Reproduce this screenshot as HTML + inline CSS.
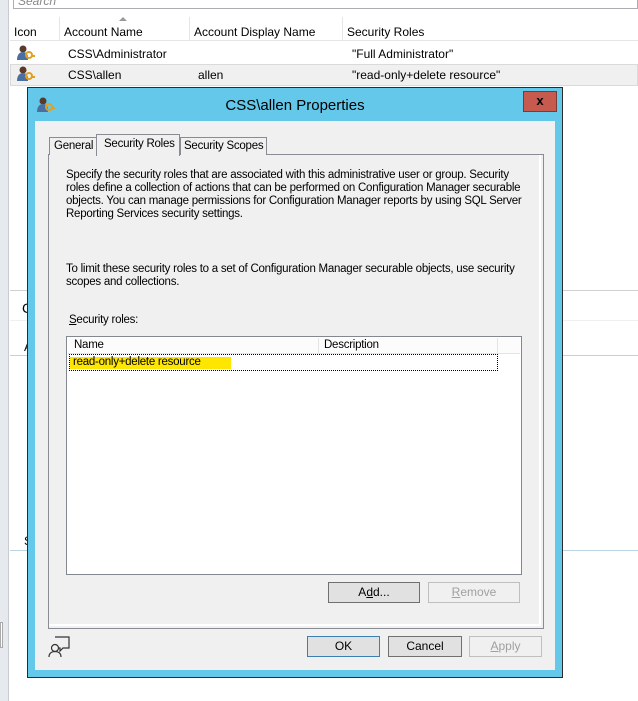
<!DOCTYPE html>
<html><head><style>
*{margin:0;padding:0;box-sizing:border-box}
body{width:638px;height:701px;background:#fff;position:relative;overflow:hidden;font-family:"Liberation Sans",Arial,sans-serif;font-size:12px;color:#000}
.a{position:absolute;white-space:nowrap}
.btn{position:absolute;height:21px;border:1px solid #707070;background:#e1e1e1;text-align:center;line-height:19px;font-size:12px}
.p{letter-spacing:-0.25px;font-size:11.5px}
</style></head><body>
<div class="a" style="left:0;top:0;width:9px;height:701px;background:#e6e9ed;border-right:1px solid #c8ccd0"></div>
<div class="a" style="left:13px;top:-4px;width:625px;height:13px;border:1px solid #abadb3;background:#fff"></div>
<div class="a" style="left:18px;top:-6px;color:#888;font-style:italic;font-size:12px">Search</div>
<div class="a" style="left:10px;top:17px;width:628px;height:24px;background:#fff;border-bottom:1px solid #e5e5e5"></div>
<div class="a" style="left:59px;top:17px;width:1px;height:24px;background:#e5e5e5"></div>
<div class="a" style="left:189px;top:17px;width:1px;height:24px;background:#e5e5e5"></div>
<div class="a" style="left:342px;top:17px;width:1px;height:24px;background:#e5e5e5"></div>
<div class="a" style="left:119px;top:17px;width:0;height:0;border-left:4px solid transparent;border-right:4px solid transparent;border-bottom:4px solid #999"></div>
<div class="a" style="left:14px;top:25px">Icon</div>
<div class="a" style="left:64px;top:25px">Account Name</div>
<div class="a" style="left:194px;top:25px">Account Display Name</div>
<div class="a" style="left:347px;top:25px">Security Roles</div>
<div class="a" style="left:68px;top:47px">CSS\Administrator</div>
<div class="a" style="left:352px;top:47px">"Full Administrator"</div>
<div class="a" style="left:10px;top:64px;width:628px;height:22px;background:#f0f0f0;border:1px solid #dadada"></div>
<div class="a" style="left:68px;top:68px">CSS\allen</div>
<div class="a" style="left:198px;top:68px">allen</div>
<div class="a" style="left:352px;top:68px">"read-only+delete resource"</div>
<svg class="a" style="left:16px;top:44px" width="20" height="20"><circle cx="7" cy="5" r="3.5" fill="#5a3a2a"/><path d="M1 16c0-6 3-8 6-8s5 2 5 6v2z" fill="#4a6fa0"/><circle cx="13" cy="11" r="3" fill="none" stroke="#e0a020" stroke-width="2"/><path d="M15 12l4 0" stroke="#e0a020" stroke-width="2"/></svg>
<svg class="a" style="left:16px;top:65px" width="20" height="20"><circle cx="7" cy="5" r="3.5" fill="#5a3a2a"/><path d="M1 16c0-6 3-8 6-8s5 2 5 6v2z" fill="#4a6fa0"/><circle cx="13" cy="11" r="3" fill="none" stroke="#e0a020" stroke-width="2"/><path d="M15 12l4 0" stroke="#e0a020" stroke-width="2"/></svg>
<div class="a" style="left:10px;top:290px;width:628px;height:1px;background:#d0d0d0"></div>
<div class="a" style="left:10px;top:320px;width:628px;height:1px;background:#f0f0f0"></div>
<div class="a" style="left:10px;top:355px;width:628px;height:1px;background:#b9d4e4"></div>
<div class="a" style="left:10px;top:550px;width:628px;height:1px;background:#b9d4e4"></div>
<div class="a" style="left:22px;top:300px;font-size:14px">C</div>
<div class="a" style="left:24px;top:340px">A</div>
<div class="a" style="left:24px;top:534px">S</div>
<div class="a" style="left:0;top:622px;width:3px;height:26px;border:1px solid #aaa;background:#fff"></div>

<div class="a" style="left:27px;top:87px;width:536px;height:591px;background:#63c8ea;border:1px solid #2b2b2b"></div>
<svg class="a" style="left:36px;top:96px" width="20" height="20"><circle cx="7" cy="5" r="3.5" fill="#5a3a2a"/><path d="M1 16c0-6 3-8 6-8s5 2 5 6v2z" fill="#4a6fa0"/><circle cx="13" cy="11" r="3" fill="none" stroke="#e0a020" stroke-width="2"/><path d="M15 12l4 0" stroke="#e0a020" stroke-width="2"/></svg>
<div class="a" style="left:0;width:590px;top:97px;text-align:center;font-size:15px;color:#000">CSS\allen Properties</div>
<div class="a" style="left:523px;top:91px;width:34px;height:21px;background:#c75a4e;border:1px solid #7a3a33;text-align:center;font-weight:bold;font-size:13px;line-height:18px">x</div>
<div class="a" style="left:35px;top:121px;width:520px;height:549px;background:#f0f0f0"></div>
<div class="a" style="left:48px;top:154px;width:496px;height:475px;border:1px solid #898c95;background:#f0f0f0"></div>
<div class="a" style="left:49px;top:155px;width:492px;height:471px;border-right:2px solid #fff;border-bottom:2px solid #fff"></div>
<div class="a p" style="left:49px;top:137px;width:48px;height:18px;border:1px solid #898c95;border-bottom:none;background:#f0f0f0;padding-left:4px;line-height:17px">General</div>
<div class="a p" style="left:180px;top:137px;width:87px;height:18px;border:1px solid #898c95;border-bottom:none;background:#f0f0f0;padding-left:3px;line-height:17px">Security Scopes</div>
<div class="a p" style="left:96px;top:134px;width:84px;height:22px;border:1px solid #898c95;border-bottom:none;background:#f0f0f0;padding-left:7px;line-height:19px">Security Roles</div>
<div class="a p" style="left:66px;top:169px;line-height:13px">Specify the security roles that are associated with this administrative user or group. Security<br>roles define a collection of actions that can be performed on Configuration Manager securable<br>objects. You can manage permissions for Configuration Manager reports by using SQL Server<br>Reporting Services security settings.</div>
<div class="a p" style="left:66px;top:263px;line-height:13px">To limit these security roles to a set of Configuration Manager securable objects, use security<br>scopes and collections.</div>
<div class="a p" style="left:69px;top:314px"><u>S</u>ecurity roles:</div>
<div class="a" style="left:66px;top:336px;width:456px;height:239px;border:1px solid #828790;background:#fff"></div>
<div class="a" style="left:68px;top:338px;width:452px;height:16px;background:#fcfcfc;border-bottom:1px solid #e5e5e5"></div>
<div class="a" style="left:318px;top:338px;width:1px;height:16px;background:#e5e5e5"></div>
<div class="a" style="left:497px;top:338px;width:1px;height:16px;background:#e5e5e5"></div>
<div class="a p" style="left:74px;top:339px">Name</div>
<div class="a p" style="left:324px;top:339px">Description</div>
<div class="a" style="left:69px;top:354px;width:429px;height:17px;border:1px dotted #000"></div>
<div class="a" style="left:70px;top:357px;width:161px;height:12px;background:#ffe600"></div>
<div class="a p" style="left:73px;top:356px">read-only+delete resource</div>
<div class="btn" style="left:328px;top:582px;width:92px">A<u>d</u>d...</div>
<div class="btn" style="left:428px;top:582px;width:92px;border-color:#bfbfbf;background:#f0f0f0;color:#a0a0a0"><u>R</u>emove</div>
<div class="btn" style="left:307px;top:636px;width:73px;border-color:#3c7fb1">OK</div>
<div class="btn" style="left:388px;top:636px;width:74px">Cancel</div>
<div class="btn" style="left:469px;top:636px;width:73px;border-color:#bfbfbf;background:#f0f0f0;color:#a0a0a0"><u>A</u>pply</div>
<svg class="a" style="left:47px;top:636px" width="24" height="22" fill="none" stroke="#333" stroke-width="1.2"><path d="M8 1h14v11h-6l-3 3v-3h-1"/><circle cx="8" cy="12" r="3.5" fill="#f0f0f0"/><path d="M2 21c0-4 3-5.5 6-5.5s6 1.5 6 5.5"/></svg>
</body></html>
